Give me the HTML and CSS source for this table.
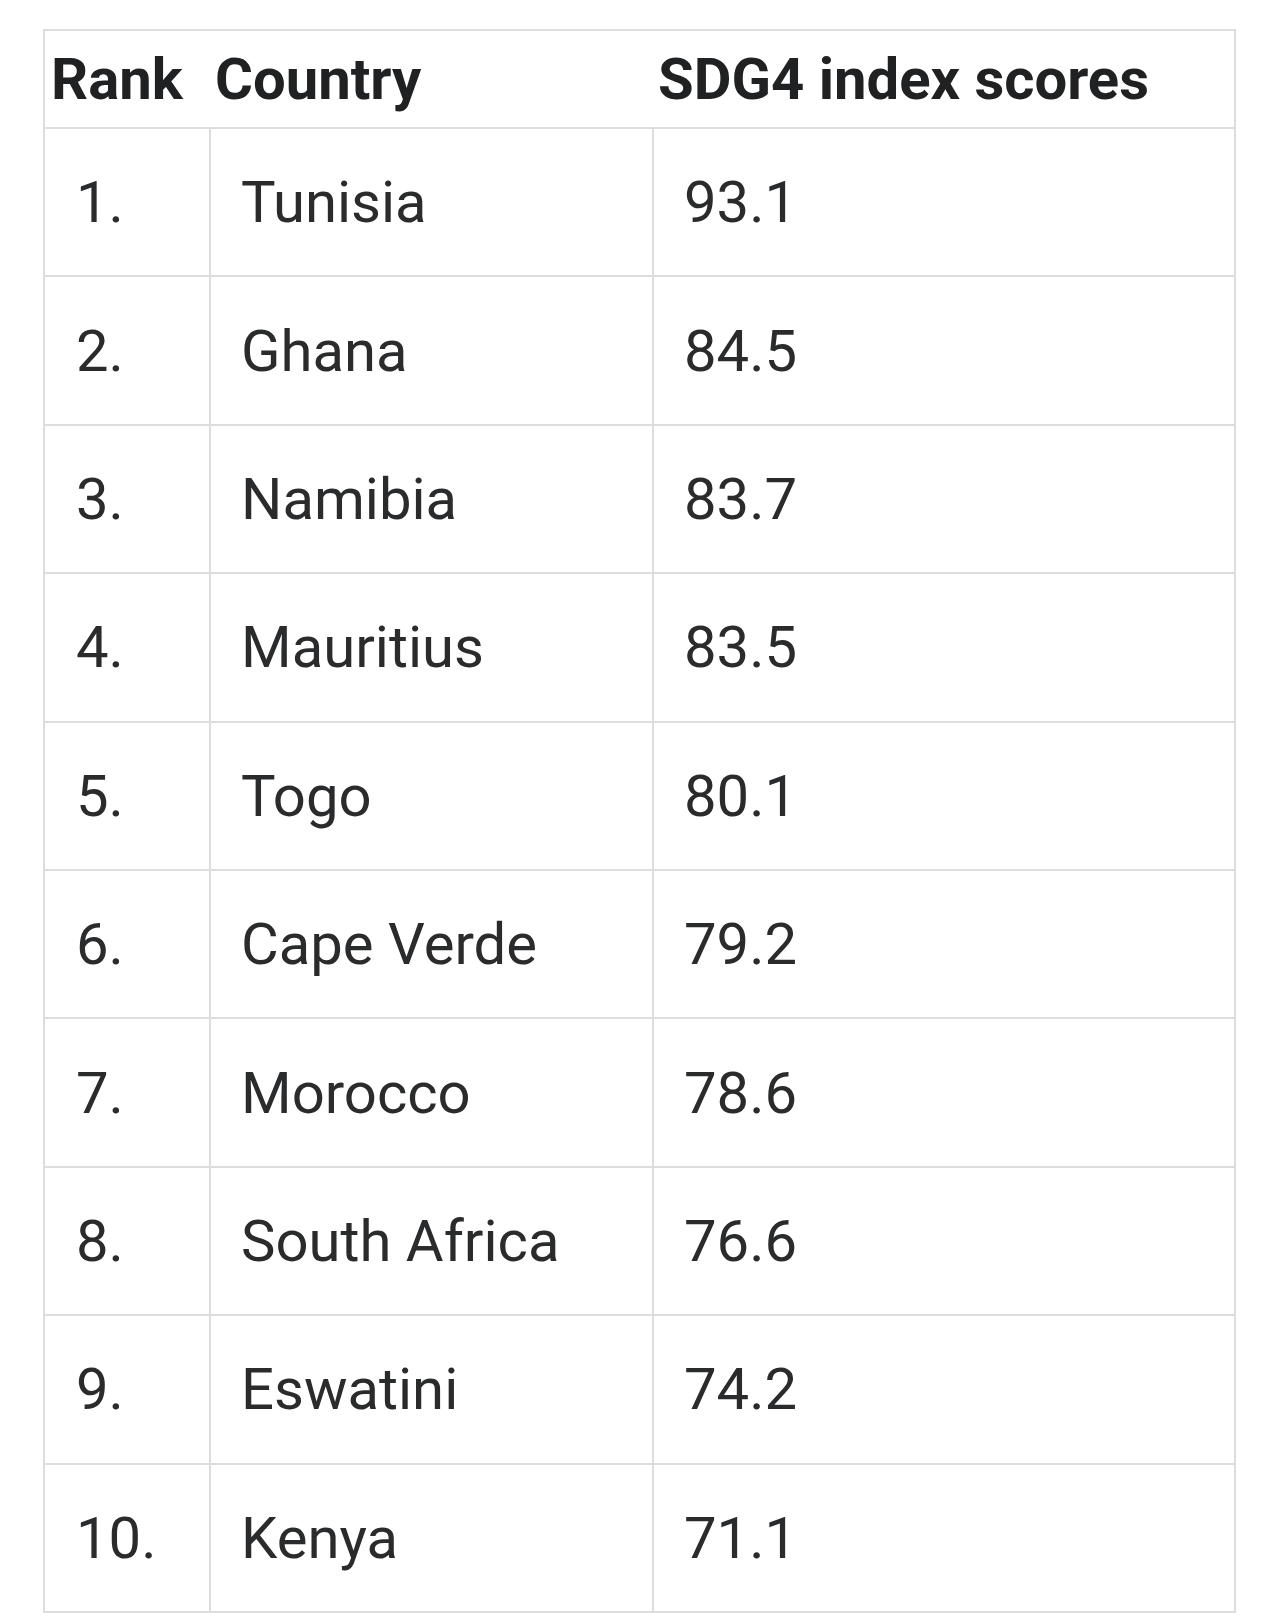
FILE: index.html
```html
<!DOCTYPE html>
<html lang="en">
<head>
<meta charset="utf-8">
<title>SDG4 index scores</title>
<link rel="stylesheet" href="styles.css">
</head>
<body>
<table class="scores">
  <colgroup>
    <col class="c-rank">
    <col class="c-country">
    <col class="c-score">
  </colgroup>
  <thead>
    <tr>
      <th>Rank</th>
      <th>Country</th>
      <th>SDG4 index scores</th>
    </tr>
  </thead>
  <tbody>
    <tr><td>1.</td><td>Tunisia</td><td>93.1</td></tr>
    <tr><td>2.</td><td>Ghana</td><td>84.5</td></tr>
    <tr><td>3.</td><td>Namibia</td><td>83.7</td></tr>
    <tr><td>4.</td><td>Mauritius</td><td>83.5</td></tr>
    <tr><td>5.</td><td>Togo</td><td>80.1</td></tr>
    <tr><td>6.</td><td>Cape Verde</td><td>79.2</td></tr>
    <tr><td>7.</td><td>Morocco</td><td>78.6</td></tr>
    <tr><td>8.</td><td>South Africa</td><td>76.6</td></tr>
    <tr><td>9.</td><td>Eswatini</td><td>74.2</td></tr>
    <tr><td>10.</td><td>Kenya</td><td>71.1</td></tr>
  </tbody>
</table>
</body>
</html>
```

FILE: styles.css
```css
html, body {
  margin: 0;
  padding: 0;
  background: #ffffff;
}

body {
  font-family: Roboto, "Noto Sans", "Liberation Sans", sans-serif;
  color: #222324;
}

.scores {
  margin: 29px 0 0 43px;
  width: 1193px;
  table-layout: fixed;
  border-collapse: separate;
  border-spacing: 0;
  border: 2px solid #dddddd;
}

.c-rank { width: 164px; }
.c-country { width: 443px; }
.c-score { width: 582px; }

.scores th {
  height: 96px;
  padding: 0 6px;
  text-align: left;
  vertical-align: middle;
  font-size: 58px;
  font-weight: 700;
  color: #202122;
  border-bottom: 2px solid #dddddd;
  white-space: nowrap;
}

.scores td {
  height: 146.4px;
  padding: 0 30px;
  vertical-align: middle;
  font-size: 58px;
  font-weight: 400;
  color: #2a2b2c;
  border-bottom: 2px solid #dddddd;
  border-left: 2px solid #dddddd;
}

.scores td:first-child {
  border-left: none;
  padding-left: 31px;
}

.scores tbody tr:last-child td {
  border-bottom: none;
}
```
